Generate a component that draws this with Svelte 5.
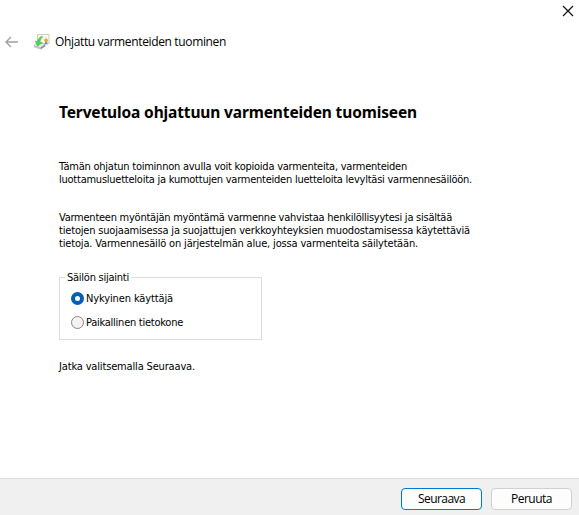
<script>
  const intro = [
    ['Tämän ohjatun toiminnon avulla voit kopioida varmenteita, varmenteiden', 348],
    ['luottamusluetteloita ja kumottujen varmenteiden luetteloita levyltäsi varmennesäilöön.', 413],
  ];
  const details = [
    ['Varmenteen myöntäjän myöntämä varmenne vahvistaa henkilöllisyytesi ja sisältää', 393],
    ['tietojen suojaamisessa ja suojattujen verkkoyhteyksien muodostamisessa käytettäviä', 411],
    ['tietoja. Varmennesäilö on järjestelmän alue, jossa varmenteita säilytetään.', 359],
  ];

  let location = $state('user');

  // Spreads the letters of a line over the given width.
  function fit(node, width) {
    const natural = node.getBoundingClientRect().width;
    node.style.letterSpacing = (width - natural) / node.textContent.length + 'px';
  }
</script>

<div class="wizard">
  <div class="titlebar">
    <button class="close" aria-label="Sulje">
      <svg width="12" height="12" viewBox="0 0 12 12"><path d="M1 1 11 11M11 1 1 11" stroke="#111" stroke-width="1.2" /></svg>
    </button>
  </div>

  <header>
    <svg class="back" width="14" height="12" viewBox="0 0 14 12" fill="none" stroke="#a0a0a0" stroke-width="1.4">
      <path d="M13 6H1.2M6 1 1 6l5 5" />
    </svg>
    <svg class="cert" width="17" height="17" viewBox="0 0 17 17">
      <path d="M4.5 1.5h11.5v9H4.5z" fill="#fdfcf8" stroke="#d2cabb" />
      <path d="M7 3.5h7v4H7z" fill="#f7f1e4" />
      <path d="m12 8-.3 4 1.4-1 1.4 1-.3-4z" fill="#5b95d6" />
      <circle cx="13.1" cy="7.2" r="1.8" fill="#efa62b" />
      <path d="m.8 12.3 3.4-2.6 8 1.6-4.5 3.2z" fill="#ececec" stroke="#b0b3b4" stroke-width=".6" />
      <path d="m.8 12.3 6.9 2.2v1.9L.8 14.2z" fill="#c3c6c7" />
      <path d="m7.7 14.5 4.5-3.2v1.9l-4.5 3.2z" fill="#858b8d" />
      <path d="M9.3 3.2C6.3 3.9 4.9 5.8 4.7 8.6L2.3 8.2l2.2 5 5-3.6-2.4-.6c.1-2.2.8-4 2.6-5.2z" fill="#4fd452" stroke="#2cae3a" stroke-width=".4" />
    </svg>
    <span class="name"><span use:fit={171}>Ohjattu varmenteiden tuominen</span></span>
  </header>

  <main>
    <h1><span use:fit={358}>Tervetuloa ohjattuun varmenteiden tuomiseen</span></h1>
    <p class="intro">
      {#each intro as [text, width]}<span class="line"><span use:fit={width}>{text}</span></span>{/each}
    </p>
    <p class="details">
      {#each details as [text, width]}<span class="line"><span use:fit={width}>{text}</span></span>{/each}
    </p>

    <div class="group" role="radiogroup" aria-labelledby="place">
      <div class="legend" id="place"><span use:fit={62}>Säilön sijainti</span></div>
      <label>
        <input type="radio" value="user" bind:group={location} />
        <span use:fit={87}>Nykyinen käyttäjä</span>
      </label>
      <label>
        <input type="radio" value="machine" bind:group={location} />
        <span use:fit={97}>Paikallinen tietokone</span>
      </label>
    </div>

    <p class="next"><span use:fit={136}>Jatka valitsemalla Seuraava.</span></p>
  </main>

  <footer>
    <button class="primary"><span use:fit={47}>Seuraava</span></button>
    <button><span use:fit={41}>Peruuta</span></button>
  </footer>
</div>

<style>
  :global(body) { margin: 0; }
  .wizard {
    width: 579px; height: 515px; display: flex; flex-direction: column;
    background: #fff; color: #000; overflow: hidden;
    font: 11px/13px "DejaVu Sans Condensed", "Noto Sans", sans-serif;
    white-space: nowrap;
  }
  .titlebar { height: 28px; display: flex; justify-content: flex-end; padding: 5px 5px 0 0; box-sizing: border-box; }
  .close { width: 12px; height: 12px; padding: 0; border: 0; background: none; display: block; }
  .close svg { display: block; }
  header { height: 28px; display: flex; align-items: center; padding-left: 5px; font: 12px/16px "Open Sans", "Noto Sans", sans-serif; }
  .back { margin-top: -1px; }
  .cert { margin: -2px 5px 0 14px; }
  main { flex: 1; padding: 45px 0 0 59px; }
  h1 { margin: 0; font: bold 15.5px/22px "Noto Sans", sans-serif; }
  p { margin: 0; }
  .line { display: block; }
  .intro { margin-top: 37px; }
  .details { margin-top: 25px; }
  .group { width: 203px; height: 63px; box-sizing: border-box; border: 1px solid #dcdcdc; margin-top: 27px; padding-left: 11px; }
  .legend { width: 64px; height: 13px; margin: -7px 0 0 -6px; padding-left: 2px; background: #fff; }
  label { display: flex; align-items: center; height: 24px; gap: 2px; }
  .legend + label { margin-top: 2px; }
  input { appearance: none; width: 13px; height: 13px; margin: 0; box-sizing: border-box; border: 1px solid #858585; border-radius: 50%; background: #f3f3f3; }
  input:checked { border: 4px solid #005fb8; background: #fff; }
  .next { margin-top: 20px; }
  footer { height: 37px; box-sizing: border-box; border-top: 1px solid #dfdfdf; background: #f0f0f0; display: flex; justify-content: flex-end; gap: 9px; padding: 9px 7px 0 0; }
  footer button { width: 81px; height: 22px; padding: 0; box-sizing: border-box; border: 1px solid #d0d0d0; border-radius: 4px; background: #fdfdfd; color: #000; font: 12px/18px "Open Sans", "Noto Sans", sans-serif; }
  footer .primary { border-color: #0078d4; }
</style>
